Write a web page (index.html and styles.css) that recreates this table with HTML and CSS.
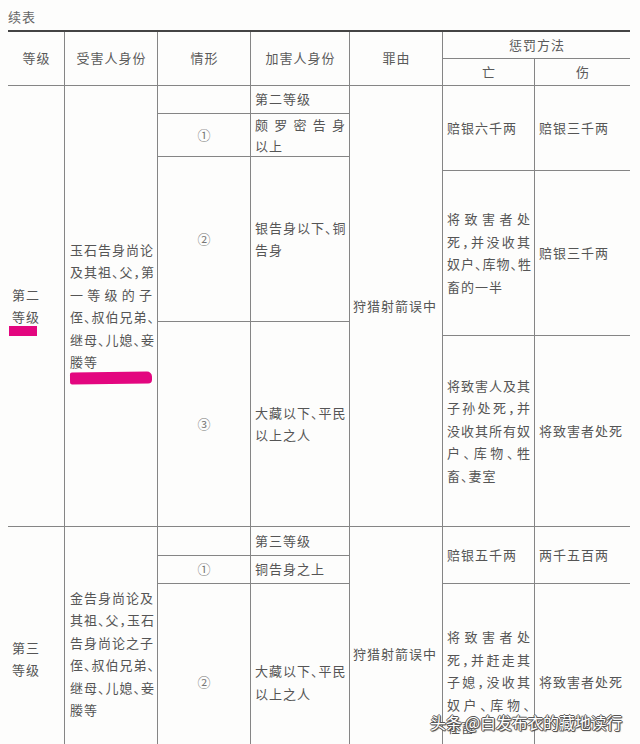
FILE: index.html
```html
<!DOCTYPE html>
<html lang="zh-CN">
<head>
<meta charset="utf-8">
<title>续表</title>
<link rel="stylesheet" href="styles.css">
</head>
<body>
<div class="page">
  <div class="caption">续表</div>
  <div class="tbl">
    <div class="cell hd r2">等级</div>
    <div class="cell hd r2">受害人身份</div>
    <div class="cell hd r2">情形</div>
    <div class="cell hd r2">加害人身份</div>
    <div class="cell hd r2">罪由</div>
    <div class="cell hd c2 last">惩罚方法</div>
    <div class="cell hd">亡</div>
    <div class="cell hd last">伤</div>

    <div class="cell lvl r6"><div class="wrap">第二<br>等级<span class="pink pink-a"></span></div></div>
    <div class="cell vic r6"><div class="wrap"><span class="j">玉石告身尚论</span><span class="j">及其祖、父，第</span><span class="j">一等级的子</span><span class="j">侄、叔伯兄弟、</span><span class="j">继母、儿媳、妾</span><span class="l">媵等</span><span class="pink pink-b"></span></div></div>
    <div class="cell num"></div>
    <div class="cell off">第二等级</div>
    <div class="cell why r6">狩猎射箭误中</div>
    <div class="cell pen r3">赔银六千两</div>
    <div class="cell pen r3 last">赔银三千两</div>
    <div class="cell num">①</div>
    <div class="cell off tight"><span class="j">颇罗密告身</span><span class="l">以上</span></div>
    <div class="cell num r2">②</div>
    <div class="cell off r2"><span class="j">银告身以下、铜</span><span class="l">告身</span></div>
    <div class="cell pen r2"><span class="j">将致害者处</span><span class="j">死，并没收其</span><span class="j">奴户、库物、牲</span><span class="l">畜的一半</span></div>
    <div class="cell pen r2 last">赔银三千两</div>
    <div class="cell num r2">③</div>
    <div class="cell off r2"><span class="j">大藏以下、平民</span><span class="l">以上之人</span></div>
    <div class="cell pen"><span class="j">将致害人及其</span><span class="j">子孙处死，并</span><span class="j">没收其所有奴</span><span class="j">户、库物、牲</span><span class="l">畜、妻室</span></div>
    <div class="cell pen last">将致害者处死</div>

    <div class="cell lvl r3 low"><div class="wrap">第三<br>等级</div></div>
    <div class="cell vic r3"><div class="wrap"><span class="j">金告身尚论及</span><span class="j">其祖、父，玉石</span><span class="j">告身尚论之子</span><span class="j">侄、叔伯兄弟、</span><span class="j">继母、儿媳、妾</span><span class="l">媵等</span></div></div>
    <div class="cell num"></div>
    <div class="cell off">第三等级</div>
    <div class="cell why r3">狩猎射箭误中</div>
    <div class="cell pen r2">赔银五千两</div>
    <div class="cell pen r2 last">两千五百两</div>
    <div class="cell num">①</div>
    <div class="cell off">铜告身之上</div>
    <div class="cell num">②</div>
    <div class="cell off"><span class="j">大藏以下、平民</span><span class="l">以上之人</span></div>
    <div class="cell pen"><span class="j">将致害者处</span><span class="j">死，并赶走其</span><span class="j">子媳，没收其</span><span class="j">奴户、库物、</span><span class="l">牲畜</span></div>
    <div class="cell pen last">将致害者处死</div>
  </div>
</div>
<div class="watermark">头条 @白发布衣的藏地读行</div>
</body>
</html>
```

FILE: styles.css
```css
html, body {
  margin: 0;
  padding: 0;
  background: #fdfdfc;
  height: 744px;
  overflow: hidden;
}
body {
  position: relative;
  font-family: "Noto Sans CJK SC", "Noto Sans", sans-serif;
  color: #555;
}
.page {
  padding: 8px 0 0 8px;
}
.caption {
  font-size: 13px;
  line-height: 18px;
  letter-spacing: 1px;
  color: #666;
  height: 22px;
}
.tbl {
  width: 622px;
  display: grid;
  grid-template-columns: 57px 93px 93px 99px 93px 92px 95px;
  grid-template-rows: 27px 27px 28px 43px 14px 151px 14px 191px 29px 28px 198px;
  border-top: 2px solid #444;
  font-size: 13px;
  line-height: 22.5px;
  letter-spacing: 1px;
  font-feature-settings: "halt";
}
.cell {
  box-sizing: border-box;
  border-right: 1px solid #858585;
  border-bottom: 1px solid #858585;
  display: flex;
  flex-direction: column;
  justify-content: center;
  padding: 0 3px 0 4px;
  min-width: 0;
  min-height: 0;
  white-space: nowrap;
}
.cell.last { border-right: none; }
.r2 { grid-row: span 2; }
.r3 { grid-row: span 3; }
.r6 { grid-row: span 6; }
.c2 { grid-column: span 2; }
.hd {
  text-align: center;
  align-items: center;
  color: #5a5a5a;
}
.num {
  align-items: center;
  color: #777;
}
.vic { padding: 0 4px 0 5px; }
.why { padding: 0 3px 0 3px; }
.tight { line-height: 21px; }
.low { padding-top: 10px; }
.wrap {
  position: relative;
  display: flex;
  flex-direction: column;
}
.j {
  display: block;
  text-align: justify;
  text-align-last: justify;
}
.l { display: block; }
.pink {
  position: absolute;
  background: #e3067f;
  display: block;
}
.pink-a {
  left: -3px;
  top: 42px;
  width: 28px;
  height: 10px;
}
.pink-b {
  left: 0;
  bottom: -10px;
  width: 82px;
  height: 12px;
  border-radius: 2px 5px 4px 2px;
  transform: rotate(-0.8deg);
}
.watermark {
  position: absolute;
  left: 430px;
  top: 710px;
  font-size: 16px;
  line-height: 24px;
  letter-spacing: -0.2px;
  color: #fff;
  white-space: nowrap;
  text-shadow: 1px 0 0 #555, -1px 0 0 #555, 0 1px 0 #555, 0 -1px 0 #555, 1px 1px 1px #333;
}
```
